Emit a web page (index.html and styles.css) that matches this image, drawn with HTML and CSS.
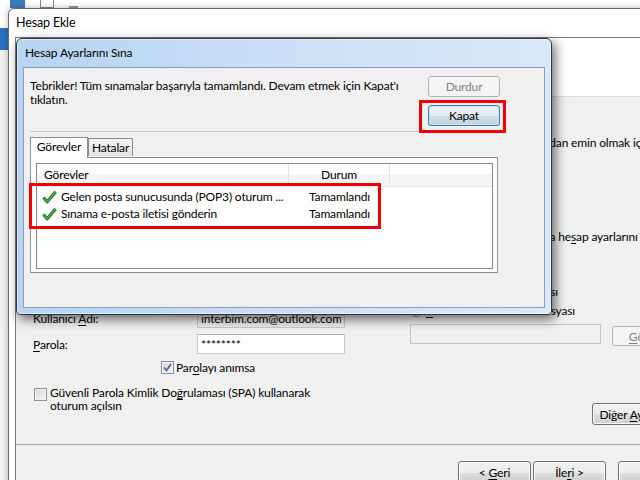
FILE: index.html
```html
<!doctype html>
<html lang="tr">
<head>
    <meta charset="UTF-8">
    <meta name="viewport" content="width=device-width, initial-scale=1.0">
    <title>Hesap Ekle</title>
    <link rel="stylesheet" href="styles.css">
</head>
<body>
    <div class="desktop">
        <!-- outlook behind the wizard -->
        <div class="quick-bar">
            <span class="qa qa-save"></span>
            <span class="qa qa-mail"></span>
            <span class="qa qa-undo"></span>
        </div>
        <div class="file-tab"></div>

        <div class="wizard">
            <div class="wizard-title">Hesap Ekle</div>
            <div class="wizard-frame">
                <div class="wizard-client">
                    <div class="page-header">
                        <strong>POP ve IMAP Hesap Ayarları</strong>
                        <span>Hesabınız için posta sunucusu ayarlarını girin.</span>
                    </div>
                    <div class="page-body">
                        <div class="col-left">
                            <div class="group-title">Kullanıcı Bilgileri</div>
                            <div class="field">
                                <span class="field-label">Adınız:</span>
                                <input class="textbox" type="text" value="interbim">
                            </div>
                            <div class="field">
                                <span class="field-label">E-posta Adresi:</span>
                                <input class="textbox" type="text" value="interbim.com@outlook.com">
                            </div>
                            <div class="group-title spaced">Sunucu Bilgileri</div>
                            <div class="field">
                                <span class="field-label">Hesap Türü:</span>
                                <input class="textbox" type="text" value="POP3">
                            </div>
                            <div class="field">
                                <span class="field-label">Gelen posta sunucusu:</span>
                                <input class="textbox" type="text" value="pop-mail.outlook.com">
                            </div>
                            <div class="field">
                                <span class="field-label">Giden posta sunucusu (SMTP):</span>
                                <input class="textbox" type="text" value="smtp-mail.outlook.com">
                            </div>
                            <div class="group-title">Oturum Açma Bilgileri</div>
                            <div class="field">
                                <span class="field-label">Kullanıcı <u>A</u>dı:</span>
                                <input class="textbox grey" type="text" value="interbim.com@outlook.com">
                            </div>
                            <div class="field">
                                <span class="field-label"><u>P</u>arola:</span>
                                <input class="textbox" type="text" value="********">
                            </div>
                            <div class="check-row remember">
                                <span class="check checked">
                                    <svg width="11" height="11" viewBox="0 0 11 11"><path d="M2 5.5 L4.5 8.5 L9 2" fill="none" stroke="#4a6a9e" stroke-width="1.8"/></svg>
                                </span>
                                <span>Par<u>o</u>layı anımsa</span>
                            </div>
                            <div class="check-row spa">
                                <span class="check"></span>
                                <span>Güvenli Parola Kimlik Do<u>ğ</u>rulaması (SPA) kullanarak<br>oturum açılsın</span>
                            </div>
                        </div>

                        <div class="col-right">
                            <div class="r-title">Hesap Ayarlarını Sına</div>
                            <p class="r-desc">Bilgileri girdikten sonra,<br>girdilerinizin doğru olduğundan emin olmak için hesabınızı sınamanızı öneririz.</p>
                            <button class="btn btn-test" type="button">Hesap Ayarlarını <u>S</u>ına ...</button>
                            <div class="auto-check">
                                <span class="check checked">
                                    <svg width="11" height="11" viewBox="0 0 11 11"><path d="M2 5.5 L4.5 8.5 L9 2" fill="none" stroke="#4a6a9e" stroke-width="1.8"/></svg>
                                </span>
                                <span>İleri tuşuna tıklattığınızda he<u>s</u>ap ayarlarını<br>otomatik olarak sına</span>
                            </div>
                            <div class="deliver">Yeni iletileri teslim et:</div>
                            <div class="radio-row">
                                <span class="radio"></span>
                                <span><u>Y</u>eni Outlook Veri Dosyası</span>
                            </div>
                            <div class="radio-row">
                                <span class="radio on"></span>
                                <span><u>V</u>arolan Outlook Veri Dosyası</span>
                            </div>
                            <div class="file-row">
                                <input class="textbox file" type="text" value="" disabled>
                                <button class="btn btn-browse" type="button" disabled><u>G</u>özat...</button>
                            </div>
                            <div class="more-row">
                                <button class="btn btn-more" type="button">Diğer <u>A</u>yarlar ...</button>
                            </div>
                        </div>
                    </div>
                    <div class="page-footer">
                        <button class="btn btn-nav" type="button">&lt; <u>G</u>eri</button>
                        <button class="btn btn-nav" type="button">İle<u>r</u>i &gt;</button>
                        <button class="btn btn-nav cancel" type="button">İptal</button>
                        <button class="btn btn-nav" type="button">Yardım</button>
                    </div>
                </div>
            </div>
        </div>

        <div class="dialog">
            <div class="dialog-title">Hesap Ayarlarını Sına</div>
            <div class="dialog-client">
                <div class="dialog-top">
                    <p class="message">Tebrikler! Tüm sınamalar başarıyla tamamlandı. Devam etmek için Kapat'ı<br>tıklatın.</p>
                    <div class="dialog-actions">
                        <button class="btn" type="button" disabled>Durdur</button>
                        <button class="btn default" type="button">Kapat</button>
                    </div>
                </div>
                <div class="separator"></div>
                <div class="tabs">
                    <span class="tab active">Görevler</span>
                    <span class="tab">Hatalar</span>
                </div>
                <div class="tab-panel">
                    <div class="list">
                        <div class="list-head">
                            <span class="head-cell">Görevler</span>
                            <span class="head-cell center">Durum</span>
                            <span class="head-cell last"></span>
                        </div>
                        <div class="list-body">
                            <div class="list-row">
                                <span class="task">
                                    <svg class="tick" width="16" height="14" viewBox="0 0 16 14"><path d="M1.5 7.5 L5.5 12 L14.5 1.5" fill="none" stroke="#1d6b22" stroke-width="3.4" stroke-linejoin="round"/><path d="M1.5 7.5 L5.5 12 L14.5 1.5" fill="none" stroke="#45b34a" stroke-width="1.6" stroke-linejoin="round"/></svg>
                                    <span class="task-name">Gelen posta sunucusunda (POP3) oturum ...</span>
                                </span>
                                <span class="state">Tamamlandı</span>
                            </div>
                            <div class="list-row">
                                <span class="task">
                                    <svg class="tick" width="16" height="14" viewBox="0 0 16 14"><path d="M1.5 7.5 L5.5 12 L14.5 1.5" fill="none" stroke="#1d6b22" stroke-width="3.4" stroke-linejoin="round"/><path d="M1.5 7.5 L5.5 12 L14.5 1.5" fill="none" stroke="#45b34a" stroke-width="1.6" stroke-linejoin="round"/></svg>
                                    <span class="task-name">Sınama e-posta iletisi gönderin</span>
                                </span>
                                <span class="state">Tamamlandı</span>
                            </div>
                        </div>
                    </div>
                </div>
            </div>
        </div>

        <!-- red marks drawn over the screenshot -->
        <div class="mark mark-close"></div>
        <div class="mark mark-rows"></div>
    </div>
</body>
</html>
```

FILE: styles.css
```css
* {
    box-sizing: border-box;
}

body {
    margin: 0;
    font-family: Lato, "Noto Sans", sans-serif;
    font-size: 12px;
    letter-spacing: -0.15px;
    color: #000;
}

u {
    text-decoration-thickness: 1px;
    text-underline-offset: 2px;
}

/* windows 7 buttons */
.btn {
    height: 21px;
    margin: 0;
    padding: 0;
    border: 1px solid #707070;
    border-radius: 3px;
    background: linear-gradient(#f2f2f2 0, #ebebeb 50%, #dddddd 51%, #cfcfcf 100%);
    box-shadow: inset 0 0 0 1px #fbfbfb;
    font: inherit;
    letter-spacing: inherit;
    color: #000;
}

.btn:disabled {
    border-color: #adb2b5;
    background: #f4f4f4;
    box-shadow: none;
    color: #838383;
}

.btn.default {
    border-color: #3c7fb1;
    background: linear-gradient(#eef3f7 0, #e4ebf1 50%, #d2dde6 51%, #c6d3de 100%);
    box-shadow: inset 0 0 0 1px #c3e4f6;
}

.desktop {
    position: relative;
    width: 640px;
    height: 480px;
    overflow: hidden;
    background: #f3f3f3;
}

/* outlook window behind */
.quick-bar {
    display: flex;
    gap: 15px;
    height: 28px;
    padding-left: 10px;
    background: #fff;
}

.qa {
    display: block;
    height: 8px;
}

.qa-save {
    width: 15px;
    background: #3c7cc4;
}

.qa-mail {
    width: 14px;
    border: 1px solid #8a8a8a;
    border-top: 0;
}

.qa-undo {
    width: 9px;
    border-bottom: 2px solid #9a9a9a;
}

.file-tab {
    width: 8px;
    height: 22px;
    background: #2a72c2;
}

/* Hesap Ekle wizard */
.wizard {
    position: absolute;
    left: 8px;
    top: 8px;
    width: 778px;
    height: 500px;
    border: 1px solid #6b6b6b;
    border-radius: 6px 6px 0 0;
    background: #fff;
    box-shadow: 0 0 7px rgba(0, 0, 0, .3);
}

.wizard-title {
    height: 28px;
    padding-left: 7px;
    line-height: 28px;
    font-size: 12.5px;
}

.wizard-frame {
    height: calc(100% - 28px);
    padding: 0 6px;
}

.wizard-client {
    height: 100%;
    border: 1px solid #7d7d7d;
    border-bottom: 0;
    background: #f0f0f0;
}

.page-header {
    display: flex;
    flex-direction: column;
    gap: 4px;
    height: 59px;
    padding: 10px 0 0 20px;
    border-bottom: 1px solid #d9d9d9;
    background: #fff;
}

.page-body {
    display: flex;
    height: 348px;
    border-bottom: 1px solid #a0a0a0;
}

.col-left {
    width: 394px;
    padding-top: 12px;
}

.group-title {
    height: 20px;
    padding-left: 8px;
    line-height: 20px;
}

.group-title.spaced {
    margin-top: 6px;
}

.field {
    display: flex;
    align-items: center;
    height: 26px;
    padding-left: 17px;
}

.field-label {
    width: 164px;
}

.textbox {
    width: 148px;
    height: 20px;
    margin: 0;
    padding: 0 3px;
    border: 1px solid #c6c8ce;
    border-top-color: #abadb3;
    background: #fff;
    font: inherit;
    letter-spacing: inherit;
    color: #000;
}

.textbox.grey {
    background: #ececec;
}

.check-row {
    display: flex;
    align-items: center;
    gap: 2px;
    height: 20px;
}

.remember {
    padding-left: 145px;
}

.spa {
    align-items: flex-start;
    gap: 3px;
    height: auto;
    margin-top: 9px;
    padding-left: 18px;
    line-height: 13px;
}

.spa .check {
    margin-top: 2px;
}

.check {
    display: flex;
    align-items: center;
    justify-content: center;
    flex: none;
    width: 13px;
    height: 13px;
    border: 1px solid #8e8f8f;
    background: linear-gradient(135deg, #d4d6d9, #f7f7f7);
    box-shadow: inset 0 0 0 1px #f2f2f2;
}

.col-right {
    width: 274px;
    padding-top: 10px;
}

.r-title {
    line-height: 15px;
}

.r-desc {
    margin: 0;
    line-height: 14px;
    white-space: nowrap;
}

.btn-test {
    margin-top: 10px;
    height: 23px;
    padding: 0 10px;
    white-space: nowrap;
}

.auto-check {
    display: flex;
    align-items: flex-start;
    gap: 5px;
    margin-top: 47px;
    line-height: 14px;
    white-space: nowrap;
}

.auto-check .check {
    margin-top: 1px;
}

.deliver {
    margin-top: 10px;
    line-height: 14px;
}

.radio-row {
    display: flex;
    align-items: center;
    gap: 3px;
    height: 19px;
    white-space: nowrap;
}

.radio {
    position: relative;
    flex: none;
    width: 13px;
    height: 13px;
    border: 1px solid #8e8f8f;
    border-radius: 50%;
    background: linear-gradient(135deg, #d4d6d9, #f7f7f7);
}

.radio.on::after {
    content: "";
    position: absolute;
    left: 3px;
    top: 3px;
    width: 5px;
    height: 5px;
    border-radius: 50%;
    background: #28466f;
}

.file-row {
    display: flex;
    align-items: flex-start;
    gap: 11px;
    margin-top: 4px;
}

.textbox.file {
    width: 191px;
    border-color: #b4c8dd;
    background: #f0f0f0;
}

.btn-browse {
    width: 72px;
    height: 20px;
    margin-top: 2px;
}

.more-row {
    display: flex;
    justify-content: flex-end;
    margin-top: 57px;
}

.btn-more {
    width: 92px;
    height: 22px;
    white-space: nowrap;
}

.page-footer {
    display: flex;
    justify-content: flex-end;
    gap: 2px;
    padding: 16px 10px 0 0;
}

.btn-nav {
    width: 73px;
    height: 23px;
}

.btn-nav.cancel {
    margin-left: 10px;
    margin-right: 2px;
}

/* Hesap Ayarlarını Sına dialog */
.dialog {
    position: absolute;
    left: 16px;
    top: 38px;
    display: flex;
    flex-direction: column;
    width: 536px;
    height: 277px;
    padding: 0 6px 6px;
    border: 1px solid #2c3440;
    border-radius: 6px 6px 4px 4px;
    background: linear-gradient(to right, #b6d3f1 0, #cbe0f6 50%, #d8e8f8 100%);
    box-shadow: 3px 4px 12px rgba(0, 0, 0, .6), inset 0 0 0 1px rgba(255, 255, 255, .5);
}

.dialog-title {
    height: 28px;
    padding-left: 2px;
    line-height: 28px;
}

.dialog-client {
    flex: 1;
    border: 1px solid #8a9db4;
    background: #f0f0f0;
}

.dialog-top {
    display: flex;
    justify-content: space-between;
    padding: 8px 44px 5px 6px;
}

.message {
    margin: 3px 0 0;
    line-height: 14px;
}

.dialog-actions {
    display: flex;
    flex-direction: column;
    gap: 8px;
}

.dialog-actions .btn {
    width: 72px;
}

.separator {
    height: 1px;
    margin: 0 44px 0 6px;
    background: #cacaca;
}

.tabs {
    position: relative;
    z-index: 1;
    display: flex;
    align-items: flex-end;
    height: 20px;
    margin: 5px 0 0 6px;
}

.tab {
    width: 45px;
    height: 18px;
    margin-bottom: 1px;
    border: 1px solid #898c95;
    border-bottom: 0;
    background: linear-gradient(#f3f3f3, #e3e3e3);
    line-height: 17px;
    text-align: center;
}

.tab.active {
    width: 58px;
    height: 21px;
    margin-bottom: -1px;
    background: #fff;
    line-height: 18px;
}

.tab-panel {
    display: flex;
    height: 116px;
    margin: 0 46px 0 6px;
    padding: 5px 4px 3px 5px;
    border: 1px solid #898c95;
    background: #fff;
}

.list {
    flex: 1;
    border: 1px solid #828790;
    background: #fff;
}

.list-head {
    display: grid;
    grid-template-columns: 252px 101px 1fr;
    height: 23px;
    border-bottom: 1px solid #e5e5e5;
    background: linear-gradient(#fff 45%, #f4f5f6 46%);
}

.head-cell {
    padding-left: 7px;
    border-right: 1px solid #e3e4e6;
    line-height: 22px;
}

.head-cell.center {
    padding-left: 0;
    text-align: center;
}

.head-cell.last {
    border-right: 0;
}

.list-body {
    padding-top: 1px;
}

.list-row {
    display: grid;
    grid-template-columns: 252px 101px;
    align-items: center;
    height: 17px;
}

.task {
    display: flex;
    align-items: center;
    gap: 4px;
    padding-left: 5px;
    overflow: hidden;
}

.tick {
    flex: none;
    width: 15px;
}

.task-name {
    white-space: nowrap;
}

.state {
    text-align: center;
}

.mark {
    position: absolute;
    border: 3px solid #f50000;
}

.mark-close {
    left: 419px;
    top: 100px;
    width: 87px;
    height: 33px;
}

.mark-rows {
    left: 29px;
    top: 183px;
    width: 352px;
    height: 46px;
}
```
